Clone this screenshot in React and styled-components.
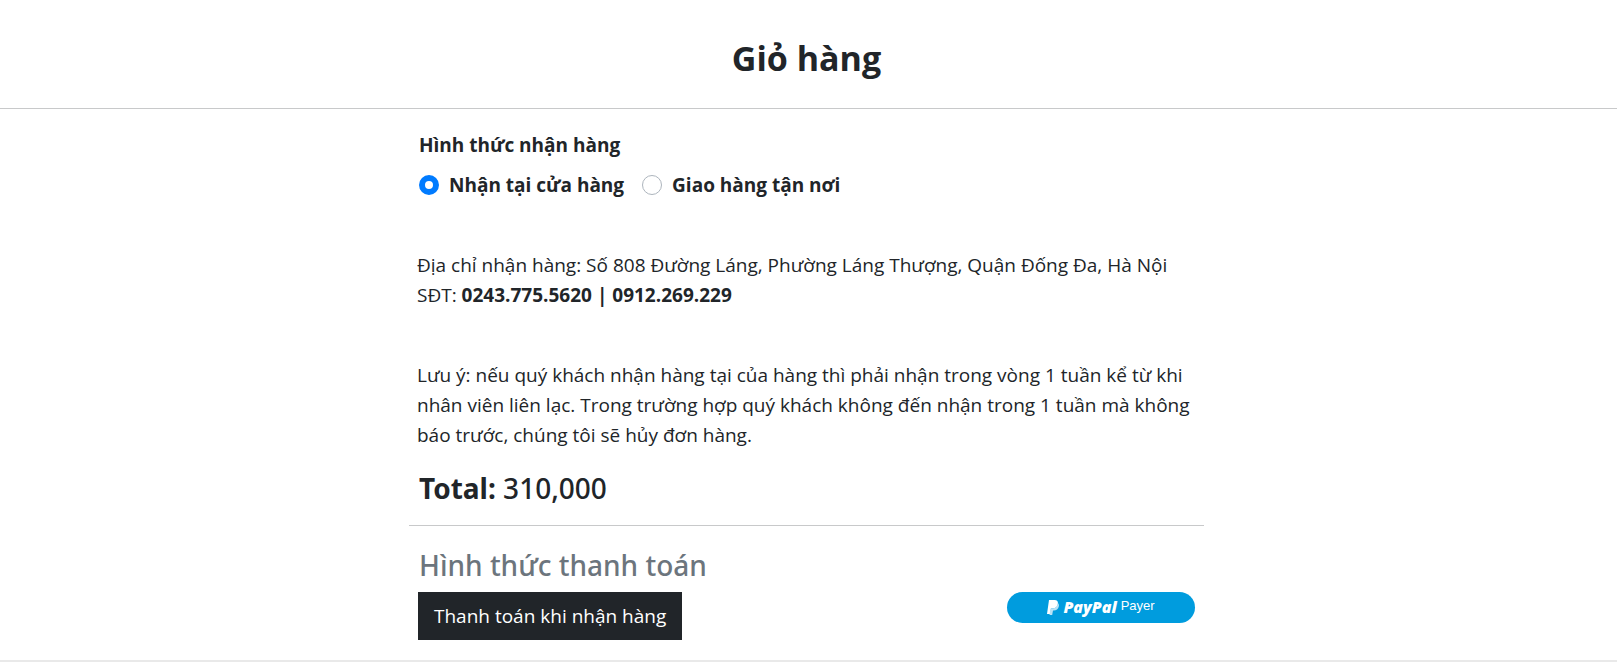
import React from "react";
import styled, { createGlobalStyle } from "styled-components";

const GlobalStyle = createGlobalStyle`
  *, *::before, *::after { box-sizing: border-box; }
  body {
    margin: 0;
    background: #fff;
    color: #212529;
    font-family: "Segoe UI", "Open Sans", "Noto Sans", sans-serif;
    font-size: 19px;
    line-height: 30px;
  }
`;

const Header = styled.header`
  padding: 35px 4px 27px 0;
  border-bottom: 1px solid #c8c9ca;
`;

const Title = styled.h1`
  margin: 0;
  font-size: 34px;
  line-height: 46px;
  font-weight: 700;
  text-align: center;
`;

const Main = styled.main`
  padding: 21px 4px 20px 0;
  border-bottom: 2px solid #e9e9e9;
`;

const Checkout = styled.form`
  max-width: 795px;
  margin: 0 auto;
`;

const Section = styled.section`
  padding: 0 8px;
`;

const Delivery = styled.fieldset`
  margin: 0;
  border: 0;
  padding: 0 10px;
`;

const Legend = styled.legend`
  padding: 0;
  font-weight: 700;
`;

const Options = styled.div`
  display: flex;
  flex-wrap: wrap;
  gap: 18px;
  padding-top: 10px;
`;

const Option = styled.label`
  display: flex;
  align-items: center;
  gap: 10px;
  font-weight: 700;
`;

const Radio = styled.input`
  appearance: none;
  width: 20px;
  height: 20px;
  margin: 0;
  border: 1px solid #adb5bd;
  border-radius: 50%;
  background: #fff;
  &:checked { border: 6px solid #007bff; }
`;

const Info = styled.p`
  margin: 0;
  padding-top: 50px;
`;

const Phone = styled.strong`
  font-weight: 700;
`;

const Total = styled.div`
  padding: 20px 10px 19px;
  border-bottom: 1px solid #c8c9ca;
  font-family: "Segoe UI", "Noto Sans", sans-serif;
  font-size: 28px;
  line-height: 36px;
  font-weight: 500;
`;

const Subtitle = styled.h2`
  margin: 0;
  padding: 21px 10px 9px;
  color: #6c757d;
  font-family: "Segoe UI", "Noto Sans", sans-serif;
  font-size: 28px;
  line-height: 36px;
  font-weight: 500;
`;

const Actions = styled.div`
  display: flex;
  align-items: flex-start;
  justify-content: space-between;
  padding: 0 9px;
`;

const CashButton = styled.button`
  height: 48px;
  padding: 0 16px;
  border: 0;
  background: #212529;
  color: #fff;
  font: inherit;
  cursor: pointer;
`;

const PayPalButton = styled.button`
  display: flex;
  justify-content: center;
  align-items: flex-start;
  gap: 4px;
  width: 188px;
  height: 31px;
  padding: 6px 0 0;
  border: 0;
  border-radius: 16px;
  background: #009cde;
  color: #fff;
  font-family: "Liberation Sans", Arial, sans-serif;
  font-size: 13px;
  line-height: 16px;
  cursor: pointer;
`;

const Mark = styled.svg`
  width: 12px;
  height: 16px;
  margin-top: 2px;
`;

const Wordmark = styled.span`
  font-family: "Open Sans", sans-serif;
  font-size: 16px;
  line-height: 19px;
  font-weight: 800;
  font-style: italic;
`;

export default function App() {
  return (
    <>
      <GlobalStyle />
      <Header>
        <Title>Giỏ hàng</Title>
      </Header>
      <Main>
        <Checkout onSubmit={(e) => e.preventDefault()}>
          <Delivery>
            <Legend>Hình thức nhận hàng</Legend>
            <Options>
              <Option>
                <Radio type="radio" name="delivery" value="store" defaultChecked />
                Nhận tại cửa hàng
              </Option>
              <Option>
                <Radio type="radio" name="delivery" value="home" />
                Giao hàng tận nơi
              </Option>
            </Options>
          </Delivery>
          <Section>
            <Info>
              Địa chỉ nhận hàng: Số 808 Đường Láng, Phường Láng Thượng, Quận Đống Đa, Hà Nội
              <br />
              SĐT: <Phone>0243.775.5620 | 0912.269.229</Phone>
            </Info>
            <Info>
              Lưu ý: nếu quý khách nhận hàng tại của hàng thì phải nhận trong vòng 1 tuần kể từ khi
              nhân viên liên lạc. Trong trường hợp quý khách không đến nhận trong 1 tuần mà không
              báo trước, chúng tôi sẽ hủy đơn hàng.
            </Info>
          </Section>
          <Total>
            <strong>Total:</strong> 310,000
          </Total>
          <Subtitle>Hình thức thanh toán</Subtitle>
          <Actions>
            <CashButton type="button">Thanh toán khi nhận hàng</CashButton>
            <PayPalButton type="button">
              <Mark viewBox="0 0 12 16" aria-hidden="true">
                <path d="M2 0h5.500c2.600 0 3.800 1.600 3.400 4-.5 3-2.400 4.400-5.200 4.400H4L3.200 14H0z" fill="#fff" />
                <path d="M10.900 3c1 .8 1.300 2 .9 3.500-.6 2.800-2.500 3.900-5 3.900H6L5.200 15H2.500l1-6.600h2.200c2.900 0 4.700-1.700 5.200-5.400z" fill="#b9e2f5" />
              </Mark>
              <Wordmark>PayPal</Wordmark>
              <span>Payer</span>
            </PayPalButton>
          </Actions>
        </Checkout>
      </Main>
    </>
  );
}
